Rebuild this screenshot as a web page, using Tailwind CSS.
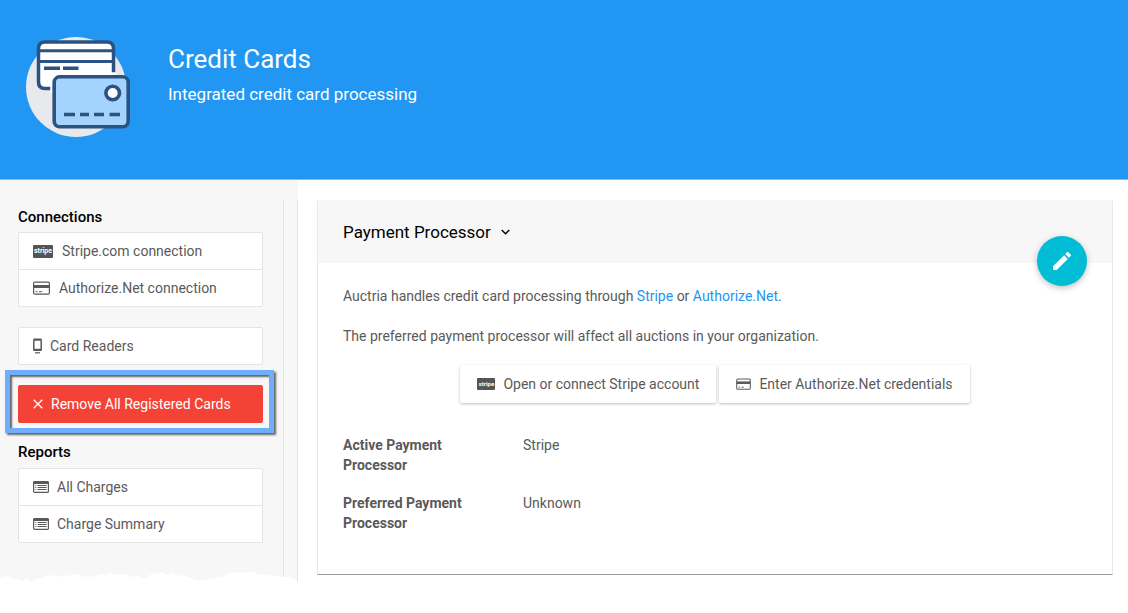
<!DOCTYPE html>
<html lang="en">

<head>
  <meta charset="UTF-8">
  <meta name="viewport" content="width=device-width, initial-scale=1.0">
  <title>Credit Cards</title>
  <script src="https://cdn.jsdelivr.net/npm/@tailwindcss/browser@4"></script>
</head>

<body class="bg-white min-h-screen font-[Roboto,sans-serif] text-sm text-[#5a5a5a]">
  <!-- Shared icons -->
  <svg class="hidden" xmlns="http://www.w3.org/2000/svg">
    <symbol id="icon-card" viewBox="0 0 17 14">
      <rect x="0.6" y="1.1" width="15.8" height="12" rx="1.2" fill="none" stroke="currentColor" stroke-width="1.2" />
      <path d="M0.500 4h16v3H0.500z" fill="currentColor" />
      <path d="M2.600 10.700h2M6 10.700h3" stroke="currentColor" stroke-width="1" />
    </symbol>
    <symbol id="icon-list" viewBox="0 0 16 12">
      <rect x="0.6" y="0.6" width="14.800" height="10.800" rx="1" fill="none" stroke="currentColor" stroke-width="1.200" />
      <path d="M0.500 0.500h15v2.500H0.500z" fill="currentColor" />
      <path d="M2.300 4.500h1M2.300 6.500h1M2.300 8.500h1M4.600 4.500h9M4.600 6.500h9M4.600 8.500h9" stroke="currentColor" stroke-width="1" />
    </symbol>
  </svg>

  <header class="flex items-start h-[180px] bg-[#2196f3] border-b border-[#8fb9dc] pl-[26px] pt-9 text-white">
    <svg class="w-[106px] h-[102px] shrink-0" viewBox="0 0 106 102" fill="none">
      <circle cx="50" cy="51" r="50" fill="#e7e9ec" />
      <path d="M33 53H19q-6.500 0-6.500-6.500V12q0-6 6.500-6h62q6.500 0 6.500 6V38" fill="#fff" />
      <path d="M25 53h62V36H25z" fill="#fff" />
      <path d="M32 52.500H19q-6.500 0-6.500-6.500V12.500q0-6.500 6.500-6.500h62q6.500 0 6.500 6.500V38" stroke="#2c5282" stroke-width="3.500" />
      <path d="M12 14.700h76M12 25.500h76" stroke="#2c5282" stroke-width="3" />
      <path d="M18 32.200h16M37 32.200h15.500" stroke="#2c5282" stroke-width="3.400" />
      <path d="M25.500 57V46q0-8.500 8.500-8.500H90" stroke="#fff" stroke-width="2.500" />
      <rect x="28.200" y="40.800" width="74" height="50" rx="5.500" fill="#a5d3ff" stroke="#2c5282" stroke-width="3.600" />
      <circle cx="86.700" cy="57" r="6.800" fill="#fff" stroke="#2c5282" stroke-width="3.600" />
      <path d="M38 78.500h11M54 78.500h9M68 78.500h10M83.500 78.500h10.500" stroke="#2c5282" stroke-width="3.400" />
    </svg>
    <div class="ml-9 pt-1">
      <h1 class="text-[26px] leading-[38px]">Credit Cards</h1>
      <p class="text-[17px] leading-8">Integrated credit card processing</p>
    </div>
  </header>

  <div class="flex items-start">
    <aside class="relative w-[298px] shrink-0 bg-[#f7f7f7] pt-5">
      <div class="flex">
        <nav class="flex-1 h-[384px] pl-[18px] pr-5 pt-[7px] border-r border-[#e4e4e4]">
          <h2 class="text-[15px] leading-5 font-medium text-black mb-[5px]">Connections</h2>
          <div class="rounded-xs border border-[#e4e4e4] bg-white divide-y divide-[#e4e4e4]">
            <a href="#" class="flex items-center h-[37px] px-[14px]">
              <span class="flex items-center justify-center w-5 h-[13px] rounded-[1px] bg-[#555] text-white text-[7px] leading-none font-bold mr-[9px]">stripe</span>
              Stripe.com connection
            </a>
            <a href="#" class="flex items-center h-9 px-[14px]">
              <svg class="w-[17px] h-[14px] mr-[9px]"><use href="#icon-card" /></svg>
              Authorize.Net connection
            </a>
          </div>

          <a href="#" class="flex items-center h-[38px] mt-5 px-[14px] rounded-xs border border-[#e4e4e4] bg-white">
            <svg class="w-[9px] h-4 mr-2 shrink-0" viewBox="0 0 9 16" fill="none">
              <rect x="0.800" y="1.800" width="7.400" height="10.400" rx="0.800" stroke="currentColor" stroke-width="1.500" />
              <path d="M0.500 1.600h8M0.500 11.800h8" stroke="currentColor" stroke-width="2" />
              <path d="M2 14.800h5" stroke="currentColor" stroke-width="1.200" />
            </svg>
            Card Readers
          </a>

          <div class="relative mt-5">
            <!-- Highlight frame around the destructive action -->
            <div class="absolute -left-[13px] -right-[11px] -top-[15px] -bottom-[10px] border-[5px] border-[#6eaefc] pointer-events-none shadow-[2px_2px_2px_rgba(0,0,0,.6),inset_2px_2px_2px_rgba(0,0,0,.6)]"></div>
            <button type="button" class="flex items-center w-full h-[38px] px-[15px] rounded-xs bg-[#f44336] text-white cursor-pointer">
              <svg class="w-[10px] h-[10px] mr-2" viewBox="0 0 10 10"><path d="M0.700 0.700l8.600 8.600M9.300 0.700l-8.600 8.600" stroke="currentColor" stroke-width="1.300" /></svg>
              Remove All Registered Cards
            </button>
          </div>

          <h2 class="text-[15px] leading-5 font-medium text-black mt-[19px] mb-[6px]">Reports</h2>
          <div class="rounded-xs border border-[#e4e4e4] bg-white divide-y divide-[#e4e4e4]">
            <a href="#" class="flex items-center h-[37px] px-[14px]">
              <svg class="w-4 h-3 mr-2"><use href="#icon-list" /></svg>
              All Charges
            </a>
            <a href="#" class="flex items-center h-9 px-[14px]">
              <svg class="w-4 h-3 mr-2"><use href="#icon-list" /></svg>
              Charge Summary
            </a>
          </div>
        </nav>
        <div class="w-[14px] border-r border-[#e4e4e4]"></div>
      </div>
      <!-- Torn bottom edge -->
      <svg class="absolute bottom-0 left-0 w-full h-3" viewBox="0 0 298 12" preserveAspectRatio="none">
        <path d="M0 6l5-2 4 1 3 2 5 0 4 2 4-1 3-1 3 3 4-3 7-1 6-3 5 1 4-1 5 2 6-2 4 1 3-2 6 1 3 2 5-1 4 1 8-3 5 1 5-2 5 2 5-1 7 1 4 2 6-1 4 2 5-1 5-3 5-1 5-1 6 3 5-2 4 3 5-1 6 2 4 1 4 2 4 0 4 1 4-2 5 0 6-2 5 0 3-3 6-2 4 1 5 0 5-1 6 0 4 2L286 5l5 0 4 2 3 3V13H0z" fill="#fff" />
      </svg>
    </aside>

    <main class="flex-1 pt-5 pl-[19px] pr-[15px]">
      <section class="relative border-x border-[#e8e8e8] border-b border-b-[#999] rounded-t-xs bg-white">
        <div class="flex items-center h-[63px] px-[25px] bg-[#f7f7f7]">
          <button type="button" class="flex items-center text-[17px] leading-6 text-black cursor-pointer">
            Payment Processor
            <svg class="w-[9px] h-[6px] ml-[10px]" viewBox="0 0 9 6" fill="none"><path d="M0.700 0.900l3.800 3.800 3.800-3.800" stroke="currentColor" stroke-width="1.400" /></svg>
          </button>
        </div>

        <button type="button" aria-label="Edit" class="absolute top-9 right-[25px] flex items-center justify-center size-[50px] rounded-full bg-[#00bcd4] text-white shadow-[0_2px_6px_rgba(0,0,0,.25)] cursor-pointer">
          <svg class="size-6" viewBox="0 0 24 24" fill="currentColor"><path d="M3 17.250V21h3.750L17.810 9.940l-3.750-3.750L3 17.250zM20.710 7.040a1 1 0 000-1.410l-2.340-2.340a1 1 0 00-1.410 0l-1.830 1.830 3.750 3.750 1.830-1.830z" /></svg>
        </button>

        <div class="px-[25px] pt-[23px] pb-[41px]">
          <p class="mb-5">Auctria handles credit card processing through <a href="#" class="text-[#2196f3]">Stripe</a> or <a href="#" class="text-[#2196f3]">Authorize.Net</a>.</p>
          <p class="mb-[19px]">The preferred payment processor will affect all auctions in your organization.</p>

          <div class="flex flex-wrap justify-center gap-[3px]">
            <button type="button" class="flex items-center h-[38px] px-[17px] rounded-xs bg-white shadow-[0_1px_3px_rgba(0,0,0,.25)] cursor-pointer">
              <span class="flex items-center justify-center w-[18px] h-3 rounded-[1px] bg-[#555] text-white text-[6px] leading-none font-bold mr-2">stripe</span>
              Open or connect Stripe account
            </button>
            <button type="button" class="flex items-center h-[38px] px-[17px] rounded-xs bg-white shadow-[0_1px_3px_rgba(0,0,0,.25)] cursor-pointer">
              <svg class="w-[15px] h-3 mr-2"><use href="#icon-card" /></svg>
              Enter Authorize.Net credentials
            </button>
          </div>

          <dl class="grid grid-cols-[150px_1fr] gap-x-[30px] gap-y-[18px] mt-8">
            <dt class="font-bold">Active Payment Processor</dt>
            <dd>Stripe</dd>
            <dt class="font-bold">Preferred Payment Processor</dt>
            <dd>Unknown</dd>
          </dl>
        </div>
      </section>
    </main>
  </div>
</body>

</html>
